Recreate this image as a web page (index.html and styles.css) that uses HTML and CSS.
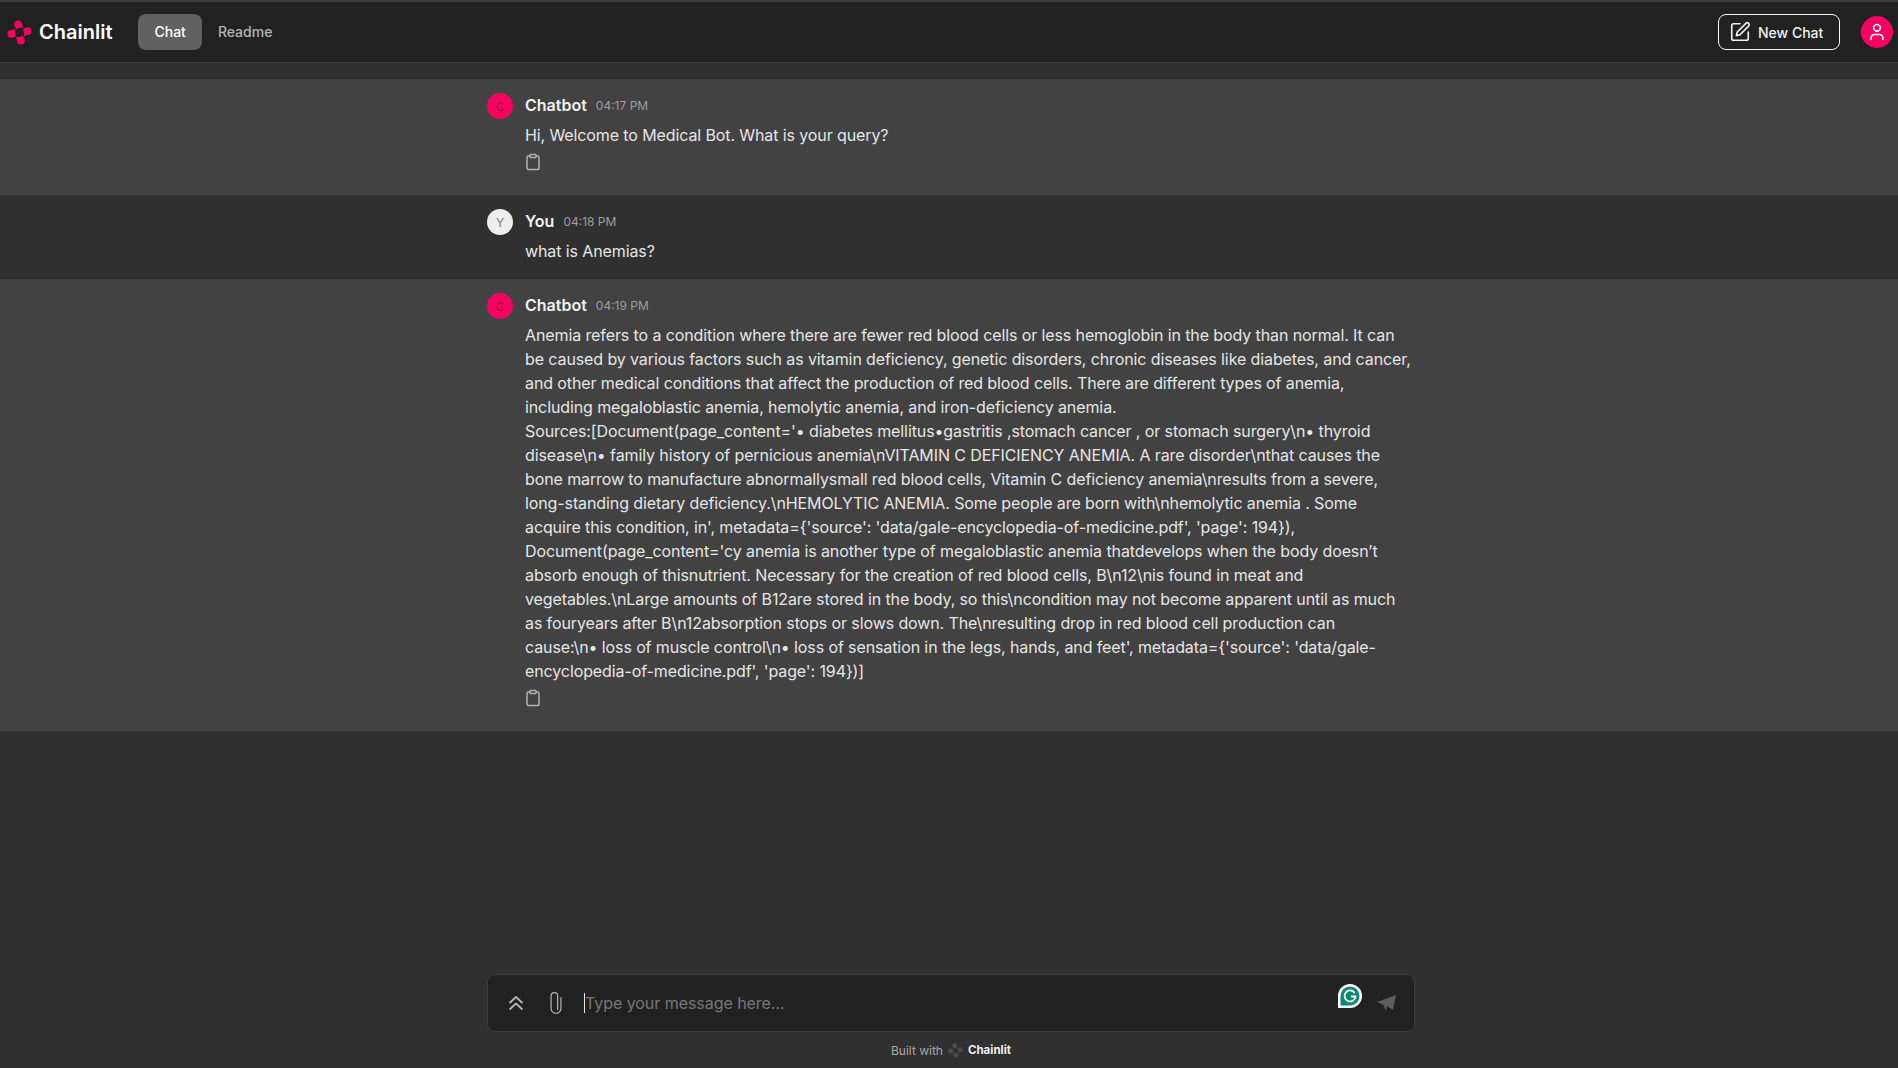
FILE: index.html
```html
<!DOCTYPE html>
<html lang="en">
<head>
    <meta charset="UTF-8">
    <title>Chainlit</title>
    <link rel="stylesheet" href="styles.css">
</head>
<body>
    <header class="topbar">
        <div class="brand">
            <svg class="logo" viewBox="0 0 26 26" width="25" height="25">
                <g fill="#f80061">
                    <path d="M7.500 4.500a4 4 0 0 1 8 0c0 1.500.8 2.500 2 3.700-2.500-.3-5-.2-7.500 1.300C8.500 8 7.500 6.500 7.500 4.500z"/>
                    <path transform="rotate(90 13 13)" d="M7.500 4.500a4 4 0 0 1 8 0c0 1.500.8 2.500 2 3.700-2.500-.3-5-.2-7.500 1.300C8.500 8 7.500 6.500 7.500 4.500z"/>
                    <path transform="rotate(180 13 13)" d="M7.500 4.500a4 4 0 0 1 8 0c0 1.500.8 2.500 2 3.700-2.500-.3-5-.2-7.500 1.300C8.500 8 7.500 6.500 7.500 4.500z"/>
                    <path transform="rotate(270 13 13)" d="M7.500 4.500a4 4 0 0 1 8 0c0 1.500.8 2.500 2 3.700-2.500-.3-5-.2-7.500 1.300C8.500 8 7.500 6.500 7.500 4.500z"/>
                </g>
            </svg>
            <span class="brand-name">Chainlit</span>
        </div>
        <nav class="tabs">
            <a class="tab active">Chat</a>
            <a class="tab">Readme</a>
        </nav>
        <div class="spacer"></div>
        <button class="new-chat">
            <svg viewBox="0 0 24 24" width="22" height="22" fill="none" stroke="currentColor" stroke-width="1.800" stroke-linecap="round" stroke-linejoin="round">
                <path d="M12 3H5a2 2 0 0 0-2 2v14a2 2 0 0 0 2 2h14a2 2 0 0 0 2-2v-7"/>
                <path d="M18.400 2.600a2.100 2.100 0 1 1 3 3L12 15l-4 1 1-4z"/>
            </svg>
            New Chat
        </button>
        <div class="user-btn">
            <svg viewBox="0 0 24 24" width="20" height="20" fill="none" stroke="#fff" stroke-width="2" stroke-linecap="round" stroke-linejoin="round">
                <path d="M19 21v-2a4 4 0 0 0-4-4H9a4 4 0 0 0-4 4v2"/>
                <circle cx="12" cy="7" r="4"/>
            </svg>
        </div>
    </header>

    <main class="messages">
        <section class="msg bot">
            <div class="msg-inner">
                <div class="avatar pink">C</div>
                <div class="msg-body">
                    <div class="msg-head"><b>Chatbot</b><span class="time">04:17 PM</span></div>
                    <p>Hi, Welcome to Medical Bot. What is your query?</p>
                    <svg class="copy" viewBox="0 0 24 24" width="18" height="18" fill="none" stroke="currentColor" stroke-width="2" stroke-linejoin="round">
                        <path d="M8 4H6a2 2 0 0 0-2 2v14a2 2 0 0 0 2 2h12a2 2 0 0 0 2-2V6a2 2 0 0 0-2-2h-2"/>
                        <rect x="8" y="2" width="8" height="4" rx="1"/>
                    </svg>
                </div>
            </div>
        </section>
        <section class="msg user">
            <div class="msg-inner">
                <div class="avatar light">Y</div>
                <div class="msg-body">
                    <div class="msg-head"><b>You</b><span class="time">04:18 PM</span></div>
                    <p>what is Anemias?</p>
                </div>
            </div>
        </section>
        <section class="msg bot">
            <div class="msg-inner">
                <div class="avatar pink">C</div>
                <div class="msg-body">
                    <div class="msg-head"><b>Chatbot</b><span class="time">04:19 PM</span></div>
                    <p>Anemia refers to a condition where there are fewer red blood cells or less hemoglobin in the body than normal. It can be caused by various factors such as vitamin deficiency, genetic disorders, chronic diseases like diabetes, and cancer, and other medical conditions that affect the production of red blood cells. There are different types of anemia, including megaloblastic anemia, hemolytic anemia, and iron-deficiency anemia.<br>
                    Sources:[Document(page_content='• diabetes mellitus•gastritis ,stomach cancer , or stomach surgery\n• thyroid disease\n• family history of pernicious anemia\nVITAMIN C DEFICIENCY ANEMIA. A rare disorder\nthat causes the bone marrow to manufacture abnormallysmall red blood cells, Vitamin C deficiency anemia\nresults from a severe, long-standing dietary deficiency.\nHEMOLYTIC ANEMIA. Some people are born with\nhemolytic anemia . Some acquire this condition, in', metadata={'source': 'data/gale-encyclopedia-of-medicine.pdf', 'page': 194}), Document(page_content='cy anemia is another type of megaloblastic anemia thatdevelops when the body doesn’t absorb enough of thisnutrient. Necessary for the creation of red blood cells, B\n12\nis found in meat and vegetables.\nLarge amounts of B12are stored in the body, so this\ncondition may not become apparent until as much as fouryears after B\n12absorption stops or slows down. The\nresulting drop in red blood cell production can cause:\n• loss of muscle control\n• loss of sensation in the legs, hands, and feet', metadata={'source': 'data/gale-encyclopedia-of-medicine.pdf', 'page': 194})]</p>
                    <svg class="copy" viewBox="0 0 24 24" width="18" height="18" fill="none" stroke="currentColor" stroke-width="2" stroke-linejoin="round">
                        <path d="M8 4H6a2 2 0 0 0-2 2v14a2 2 0 0 0 2 2h12a2 2 0 0 0 2-2V6a2 2 0 0 0-2-2h-2"/>
                        <rect x="8" y="2" width="8" height="4" rx="1"/>
                    </svg>
                </div>
            </div>
        </section>
    </main>

    <footer class="composer-wrap">
        <div class="composer">
            <svg class="ico" viewBox="0 0 24 24" width="22" height="22" fill="none" stroke="currentColor" stroke-width="2" stroke-linecap="round" stroke-linejoin="round">
                <path d="m5.500 11.500 6.500-6 6.500 6"/>
                <path d="m5.500 18.500 6.500-6 6.500 6"/>
            </svg>
            <svg class="ico clip" viewBox="0 0 12 22" width="14" height="24" fill="none" stroke="currentColor" stroke-width="1.100" stroke-linecap="round">
                <path d="M10.500 6v10a4.500 4.500 0 0 1-9 0V4.500a3 3 0 0 1 6 0V17"/>
            </svg>
            <div class="input"><span class="caret"></span>Type your message here...</div>
            <svg class="grammarly" viewBox="0 0 24 24" width="24" height="24">
                <path d="M12 0a12 12 0 0 1 0 24H0V12A12 12 0 0 1 12 0z" fill="#fff"/>
                <path d="M12 2.500a9.500 9.500 0 0 1 0 19H2.500V12A9.500 9.500 0 0 1 12 2.500z" fill="#0b8a74"/>
                <path d="M16.700 9a5.500 5.500 0 1 0 .8 3.500h-4.500" fill="none" stroke="#fff" stroke-width="1.800"/>
            </svg>
            <svg class="send" viewBox="0 0 19 17" width="19" height="17" fill="#5c5c5c">
                <path d="M0 7 19 0l-3 15-6-4-1 5-2.500-6z"/>
            </svg>
        </div>
        <div class="built">
            <span>Built with</span>
            <svg viewBox="0 0 26 26" width="15" height="15">
                <g fill="#4c4c4c">
                    <path d="M7.500 4.500a4 4 0 0 1 8 0c0 1.500.8 2.500 2 3.700-2.500-.3-5-.2-7.500 1.300C8.500 8 7.500 6.500 7.500 4.500z"/>
                    <path transform="rotate(90 13 13)" d="M7.500 4.500a4 4 0 0 1 8 0c0 1.500.8 2.500 2 3.700-2.500-.3-5-.2-7.500 1.300C8.500 8 7.500 6.500 7.500 4.500z"/>
                    <path transform="rotate(180 13 13)" d="M7.500 4.500a4 4 0 0 1 8 0c0 1.500.8 2.500 2 3.700-2.500-.3-5-.2-7.500 1.300C8.500 8 7.500 6.500 7.500 4.500z"/>
                    <path transform="rotate(270 13 13)" d="M7.500 4.500a4 4 0 0 1 8 0c0 1.500.8 2.500 2 3.700-2.500-.3-5-.2-7.500 1.300C8.500 8 7.500 6.500 7.500 4.500z"/>
                </g>
            </svg>
            <b>Chainlit</b>
        </div>
    </footer>
</body>
</html>
```
FILE: styles.css
```css
* { box-sizing: border-box; }
html, body { height: 100%; }
body { margin: 0; background: #303030; color: #e6e6e6; font-family: Inter, "Liberation Sans", sans-serif; font-size: 16px; display: flex; flex-direction: column; border-top: 2px solid #3d3d3d; }

.topbar { height: 61px; flex: none; background: #212121; border-bottom: 1px solid #3d3d3d; display: flex; align-items: center; padding: 0 5px 0 7px; }
.brand { display: flex; align-items: center; gap: 7px; }
.brand-name { font-size: 20px; font-weight: 600; color: #fff; }
.tabs { display: flex; align-items: center; margin-left: 26px; }
.tab { font-size: 14px; font-weight: 500; color: #b5b5b5; padding: 0 16px; height: 36px; line-height: 36px; border-radius: 8px; }
.tab.active { background: #616161; color: #fff; }
.spacer { flex: 1; }
.new-chat { display: flex; align-items: center; gap: 7px; height: 36px; width: 122px; padding: 0 10px; white-space: nowrap; background: transparent; border: 1px solid #f5f5f5; border-radius: 8px; color: #f0f0f0; font: 500 14px Inter, sans-serif; }
.user-btn { width: 32px; height: 32px; border-radius: 50%; background: #f80061; margin-left: 21px; display: flex; align-items: center; justify-content: center; }

.messages { margin-top: 16px; flex: 1; }
.msg { padding: 14px 0 0 4px; }
.msg.bot { background: #424242; padding-bottom: 24px; }
.msg.user { padding-bottom: 16px; }
.msg-inner { width: 928px; margin: 0 auto; display: flex; gap: 12px; }
.avatar { flex: none; width: 26px; height: 26px; border-radius: 50%; font-size: 12px; display: flex; align-items: center; justify-content: center; }
.avatar.pink { background: #f80061; color: #9c0040; }
.avatar.light { background: #eeeeee; color: #777; }
.msg-body { flex: 1; min-width: 0; }
.msg-head { height: 24px; margin-bottom: 6px; line-height: 24px; display: flex; align-items: center; gap: 9px; }
.msg-head b { font-weight: 600; color: #f2f2f2; }
.time { font-size: 12px; color: #9e9e9e; padding-top: 2px; }
.msg-body p { margin: 0; line-height: 24px; color: #e6e6e6; letter-spacing: -0.105px; padding-right: 4px; }
.copy { display: block; margin: 6px 0 0 -1px; color: #b0b0b0; }

.composer-wrap { flex: none; padding-left: 4px; }
.composer { width: 928px; height: 58px; margin: 0 auto; background: #212121; border: 1px solid #3d3d3d; border-radius: 8px; display: flex; align-items: center; padding: 0 18px 0 17px; color: #b5b5b5; }
.ico { flex: none; }
.clip { margin-left: 22px; }
.input { flex: 1; margin-left: 21px; font-size: 16px; letter-spacing: -0.05px; color: #777; display: flex; align-items: center; }
.caret { width: 1px; height: 20px; background: #e6e6e6; }
.grammarly { margin-right: 15px; margin-top: -14px; }
.built { display: flex; align-items: center; justify-content: center; gap: 5px; height: 36px; font-size: 12px; color: #a9a9a9; }
.built b { font-size: 11.5px; font-weight: 700; color: #eee; }
```
